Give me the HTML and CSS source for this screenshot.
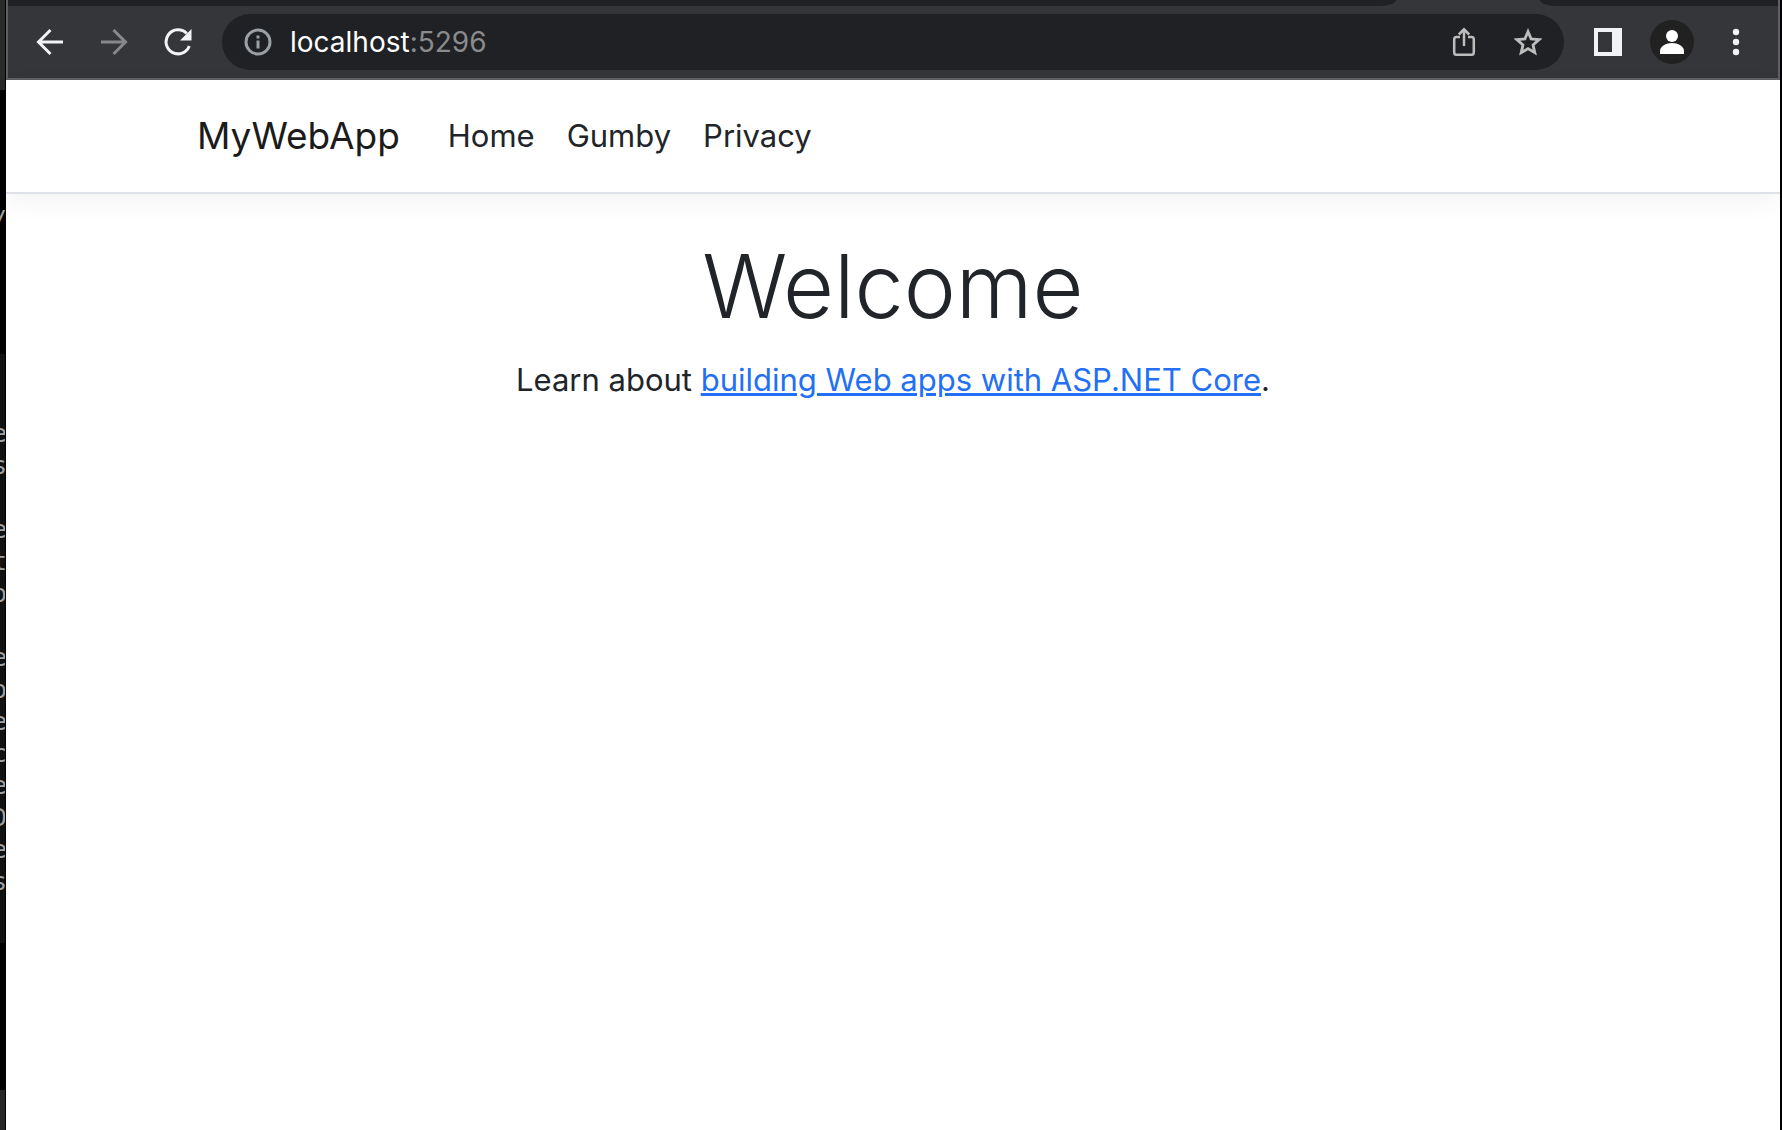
FILE: index.html
```html
<!DOCTYPE html>
<html lang="en">
<head>
<meta charset="utf-8">
<meta name="viewport" content="width=device-width, initial-scale=1">
<title>Home page - MyWebApp</title>
<link rel="stylesheet" href="styles.css">
</head>
<body>
<div class="desktop">
  <div class="terminal" aria-hidden="true">
    <div class="pane pane-title"></div>
    <div class="pane pane-top"><span class="glyph">/</span></div>
    <div class="pane pane-log">
      <span class="glyph">e</span><span class="glyph">s</span><span class="glyph"></span><span class="glyph">e</span><span class="glyph">t</span><span class="glyph">o</span><span class="glyph"></span><span class="glyph">e</span><span class="glyph">o</span><span class="glyph">e</span><span class="glyph">c</span><span class="glyph">e</span><span class="glyph">D</span><span class="glyph">e</span><span class="glyph">s</span>
    </div>
    <div class="pane pane-gap"></div>
    <div class="pane pane-foot"></div>
  </div>

  <div class="browser">
    <div class="chrome">
      <div class="tabstrip">
        <div class="tab-rest tab-rest-left"></div>
        <div class="tab-active"></div>
        <div class="tab-rest tab-rest-right"></div>
      </div>
      <div class="toolbar">
        <button class="tool" type="button" aria-label="Back">
          <svg width="28" height="28" viewBox="0 0 28 28" fill="none" stroke="#f1f3f4" stroke-width="3"><path d="M27 14H3M14.500 2L2.500 14l12 12"/></svg>
        </button>
        <button class="tool" type="button" aria-label="Forward">
          <svg width="28" height="28" viewBox="0 0 28 28" fill="none" stroke="#87888a" stroke-width="3"><path d="M1 14h24M13.500 2l12 12-12 12"/></svg>
        </button>
        <button class="tool" type="button" aria-label="Reload">
          <svg width="28" height="28" viewBox="0 0 28 28"><path d="M22.700 5.500A12 12 0 1 0 25.300 18" fill="none" stroke="#f1f3f4" stroke-width="3"/><path d="M27.500 1v11.500H16z" fill="#f1f3f4"/></svg>
        </button>
        <div class="omnibox">
          <svg class="info" width="28" height="28" viewBox="0 0 28 28"><circle cx="14" cy="14" r="12" fill="none" stroke="#9aa0a6" stroke-width="3"/><path d="M12.500 7.500h3v3h-3zM12.500 12.500h3v8h-3z" fill="#9aa0a6"/></svg>
          <div class="url" role="textbox" contenteditable="true" spellcheck="false" aria-label="Address">localhost<span class="port">:5296</span></div>
          <button class="tool" type="button" aria-label="Share">
            <svg width="28" height="32" viewBox="0 0 28 32" fill="none" stroke="#bdbdbd" stroke-width="2.500"><path d="M10 11H6.500Q4.200 11 4.200 13.300V26.500Q4.200 28.800 6.500 28.800H21.500Q23.800 28.800 23.800 26.500V13.300Q23.800 11 21.500 11H18M14 20V3.500M8.800 8.500L14 3.300l5.200 5.200"/></svg>
          </button>
          <button class="tool" type="button" aria-label="Bookmark this tab">
            <svg width="30" height="30" viewBox="0 0 30 30" fill="none" stroke="#bdbdbd" stroke-width="2.800"><path d="M15 4.500l3.100 7.400 8 .7-6.100 5.300 1.800 7.800L15 21.600l-6.800 4.100 1.800-7.800-6.100-5.300 8-.7z"/></svg>
          </button>
        </div>
        <button class="tool" type="button" aria-label="Side panel">
          <svg width="28" height="28" viewBox="0 0 28 28"><path d="M0 0h28v28H0zM4 4v20h14V4z" fill="#f1f3f4" fill-rule="evenodd"/></svg>
        </button>
        <button class="tool" type="button" aria-label="Profile">
          <svg width="44" height="44" viewBox="0 0 44 44"><circle cx="22" cy="22" r="22" fill="#212121"/><circle cx="22" cy="16" r="6" fill="#fff"/><path d="M10 34v-3c0-4.500 6-8 12-8s12 3.500 12 8v3z" fill="#fff"/></svg>
        </button>
        <button class="tool" type="button" aria-label="Menu">
          <svg width="8" height="28" viewBox="0 0 8 28" fill="#f1f3f4"><circle cx="4" cy="4" r="3.200"/><circle cx="4" cy="14" r="3.200"/><circle cx="4" cy="24" r="3.200"/></svg>
        </button>
      </div>
    </div>

    <header class="site-header">
      <nav class="container navbar">
        <a class="brand" href="#">MyWebApp</a>
        <a class="nav-link" href="#">Home</a>
        <a class="nav-link" href="#">Gumby</a>
        <a class="nav-link" href="#">Privacy</a>
      </nav>
    </header>
    <main class="container content">
      <h1 class="title">Welcome</h1>
      <p class="lead">Learn about <a class="link" href="#">building Web apps with ASP.NET Core</a>.</p>
    </main>
  </div>
</div>
</body>
</html>
```
FILE: styles.css
```css
* {
  box-sizing: border-box;
}

body {
  margin: 0;
  background: #000;
  color: #212529;
  font-family: Inter, "Liberation Sans", sans-serif;
}

.desktop {
  display: grid;
  grid-template-columns: 5px minmax(0, 1fr);
  column-gap: 1px;
  min-height: 100vh;
  padding-right: 2px;
}

/* Sliver of the terminal window behind the browser */
.terminal {
  display: flex;
  flex-direction: column;
  overflow: hidden;
  color: #a0a0a0;
  font: 24px/32px "DejaVu Sans Mono", monospace;
}

.pane {
  display: flex;
  flex-direction: column;
  align-items: flex-end;
}

.pane-title {
  height: 90px;
  background: #2a2a2a;
}

.pane-top {
  height: 264px;
  padding-top: 114px;
}

.pane-log {
  height: 589px;
  padding-top: 64px;
  background: #111;
}

.pane-gap {
  height: 147px;
}

.pane-foot {
  flex: 1;
  background: #262626;
}

.glyph {
  height: 32px;
  margin-right: -2px;
}

.browser {
  background: #fff;
}

.chrome {
  border: solid #5f6063;
  border-width: 0 2px 2px;
  background: #35363a;
}

.tabstrip {
  display: grid;
  grid-template-columns: minmax(0, 1fr) 144px 238px;
  height: 6px;
}

.tab-rest {
  background: #202124;
}

.tab-rest-left {
  border-bottom-right-radius: 16px 6px;
}

.tab-rest-right {
  border-bottom-left-radius: 16px 6px;
}

.toolbar {
  display: flex;
  align-items: center;
  height: 72px;
  padding: 0 10px;
}

.tool {
  display: flex;
  flex: none;
  align-items: center;
  justify-content: center;
  width: 64px;
  height: 56px;
  padding: 0;
  border: 0;
  background: none;
}

.omnibox {
  display: flex;
  flex: 1;
  align-items: center;
  height: 56px;
  margin: 0 12px;
  padding: 0 4px 0 22px;
  border-radius: 28px;
  background: #202124;
}

.info {
  flex: none;
  margin-right: 18px;
}

.url {
  flex: 1;
  color: #fff;
  font-size: 28px;
  line-height: 36px;
  white-space: nowrap;
}

.port {
  color: #8a8b8d;
}

.container {
  max-width: 1440px;
  margin: 0 auto;
  padding: 0 24px;
}

.site-header {
  border-bottom: 2px solid #dee2e6;
  box-shadow: 0 8px 24px rgba(0, 0, 0, 0.05);
}

.navbar {
  display: flex;
  align-items: center;
  height: 112px;
}

.brand {
  margin-right: 32px;
  color: #1b1b1b;
  font-size: 37px;
  line-height: 60px;
  text-decoration: none;
}

.nav-link {
  padding: 0 16px;
  color: #212529;
  font-size: 31px;
  line-height: 48px;
  text-decoration: none;
}

.content {
  padding-top: 38px;
  text-align: center;
}

.title {
  margin: 0 0 16px;
  font-size: 88px;
  font-weight: 300;
  line-height: 108px;
}

.lead {
  margin: 0;
  font-size: 31px;
  line-height: 48px;
}

.link {
  color: #2470f5;
}
```
